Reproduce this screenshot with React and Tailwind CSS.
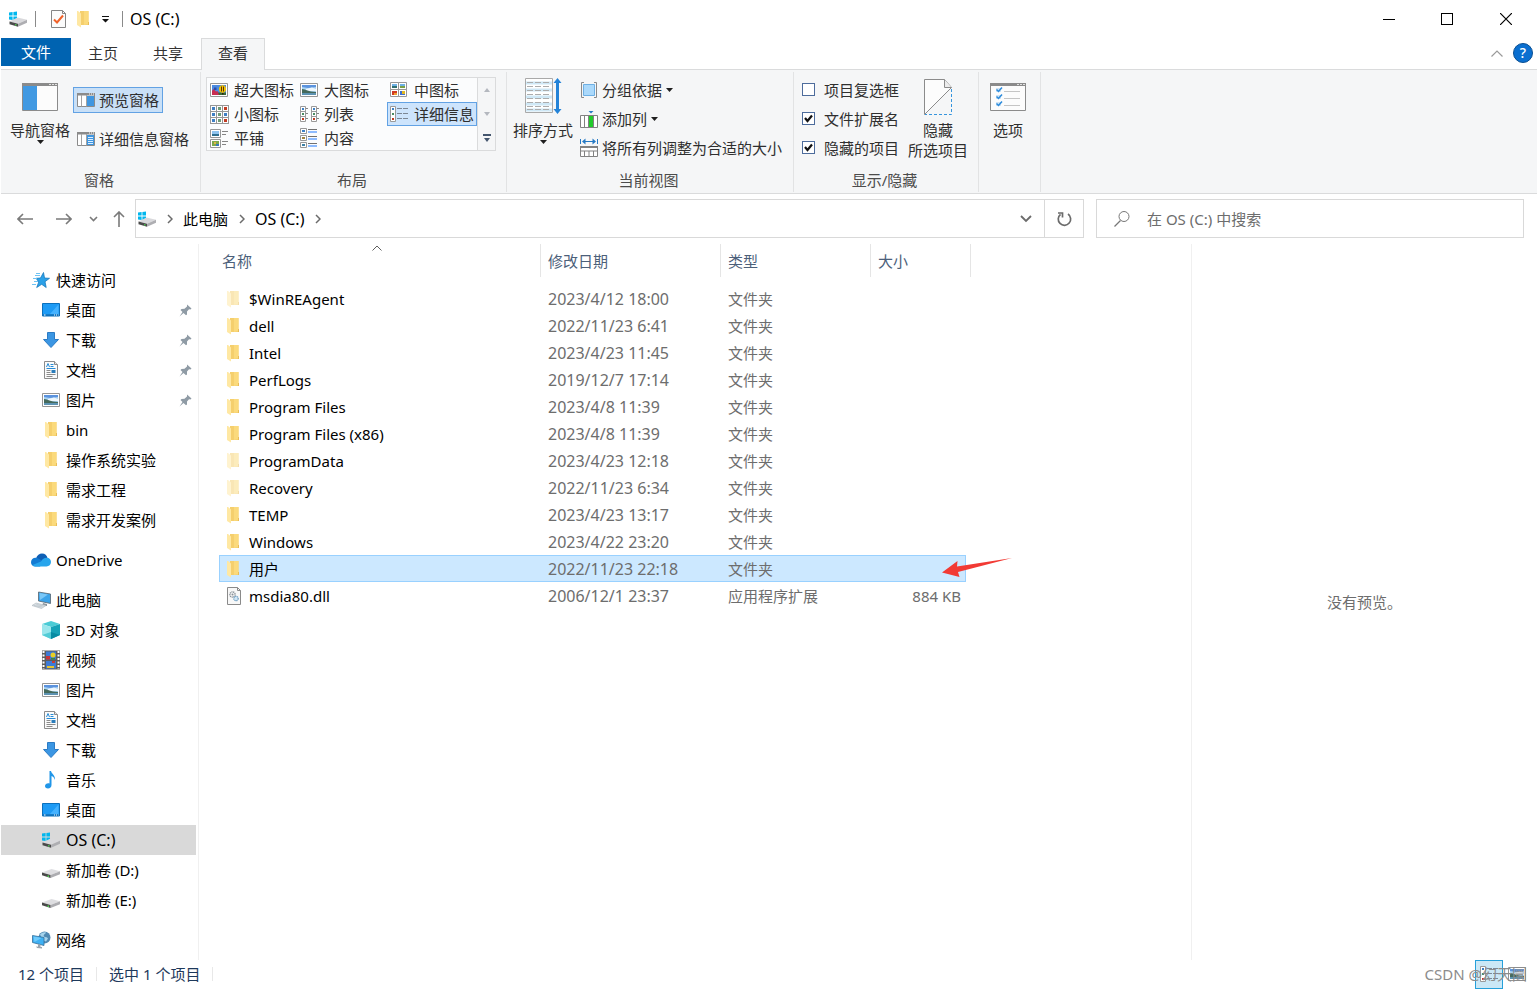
import { useState } from "react";

/* ---------- icons ---------- */

function WindowsDrive() {
    return (
        <svg width="20" height="16" viewBox="0 0 20 16" className="shrink-0">
            <path d="M1 1.4 4.6 1v3.6H1zM5.4 1 9 .4v4.2H5.4zM1 5.4h3.6V9L1 8.6zM5.4 5.4H9v4.2L5.4 9z" fill="#00b7ee" />
            <path d="M1.5 10.5 9.500 6.500 19 8.800 10 12.700z" fill="#d9d9dc" />
            <path d="M10 12.700 19 8.800v3L10 15.800z" fill="#aeaeb2" />
            <path d="M1.500 10.500 10 12.700v3.100L1.500 13.300z" fill="#4a4a4a" />
            <path d="M7 13.200h1.500v1.400H7z" fill="#4fd650" />
        </svg>
    );
}

function Drive() {
    return (
        <svg width="18" height="16" viewBox="0 0 18 16" className="shrink-0">
            <path d="M0 10.500 9.500 7 18 9.200 8.500 13z" fill="#dedee1" />
            <path d="M8.500 13 18 9.200v3L8.500 16z" fill="#adadb1" />
            <path d="M0 10.500 8.500 13v3L0 13.300z" fill="#4a4a4a" />
            <path d="M5.500 13.500H7v1.400H5.500z" fill="#4fd650" />
        </svg>
    );
}

function Folder({ faded }) {
    return (
        <svg width="12" height="18" viewBox="0 0 12 18" className={faded ? "shrink-0 opacity-50" : "shrink-0"}>
            <path d="M3 1h8.500v11H12v3H3z" fill="#f5cf6d" />
            <path d="M7 1h4.500v13L7 15z" fill="#fbda7c" />
            <path d="M0 1h1l3 2.500V17.500L0 15z" fill="#ffe8a3" />
            <path d="M11 12h1v3h-1z" fill="#e9bd58" />
        </svg>
    );
}

function QuickStar() {
    return (
        <svg width="18" height="18" viewBox="0 0 18 18" className="shrink-0">
            <path d="M11.500 1.500 12.500 7l5 .3-4.500 3.400 1.200 5.800-4.500-3.200-5 3.200 2.100-5.600L4 7.300l4.500-.3z" fill="#2ba1e8" stroke="#1879bd" strokeWidth=".8" />
            <path d="M3 4.500h5M1 7.500h4M2 10.500h4M0 13.500h4M4 2.500h4" stroke="#6fc3f3" strokeWidth="1" />
        </svg>
    );
}

function Desktop() {
    return (
        <svg width="18" height="14" viewBox="0 0 18 14" className="shrink-0">
            <path d="M.5.500h17v12.500H.500z" fill="#1e9bf5" stroke="#0b70bd" />
            <path d="M16.500 1.500v9.500H8z" fill="#45b2ff" />
            <path d="M1 12h16" stroke="#0a5f9f" />
            <path d="M2 12h1.500M12 12h1M14 12h1M16 12h.5" stroke="#fff" />
        </svg>
    );
}

function Download() {
    return (
        <svg width="18" height="18" viewBox="0 0 18 18" className="shrink-0">
            <path d="M5.500 1.500h7v7h4L9 16.500 1.500 8.500h4z" fill="#3b96e3" stroke="#2c7bc4" />
        </svg>
    );
}

function Document() {
    return (
        <svg width="18" height="18" viewBox="0 0 18 18" className="shrink-0">
            <path d="M2.500.500h10l3 3v14h-13z" fill="#fbfbfb" stroke="#8c8c8c" />
            <path d="M12.500.500v3h3" fill="#e4e4e4" stroke="#8c8c8c" />
            <path d="m4.500 6 1.500-3.500L7.500 6M8.500 3.500h3M8.500 5.500h3M4.500 7.500h9" fill="none" stroke="#268bd6" />
            <path d="M4.500 9.500h4M4.500 11.500h4M4.500 13.500h9M4.500 15.500h6" stroke="#8b8b8b" />
            <path d="M9.500 9h4v3h-4z" fill="#2b7dbb" />
        </svg>
    );
}

function Picture() {
    return (
        <svg width="18" height="14" viewBox="0 0 18 14" className="shrink-0">
            <path d="M.5.500h17v13H.500z" fill="#fff" stroke="#959595" />
            <path d="M2 2h14v10H2z" fill="#a9d3f3" />
            <path d="M2 2h14v2L8 5 2 4z" fill="#5b93de" />
            <path d="M6 6 12 4.500 16 6v2H6z" fill="#eef7fd" />
            <path d="M2 6c4 .5 6 2.500 14 3v1H2z" fill="#456a5c" />
            <path d="M2 10h14v2H2z" fill="#5d93b3" />
        </svg>
    );
}

function Flowers() {
    return (
        <svg width="18" height="14" viewBox="0 0 18 14" className="shrink-0">
            <path d="M.5.500h17v13H.500z" fill="#fff" stroke="#959595" />
            <path d="M2 2h14v10H2z" fill="#4a8ae0" />
            <path d="M2 9.500h14V12H2z" fill="#3d6a35" />
            <ellipse cx="12.500" cy="6" rx="3.500" ry="3.800" fill="#f6c500" />
            <path d="M11.500 3.500v5M13.500 3.500v5" stroke="#5a3210" />
            <path d="M12 10h1.500v1.500H12z" fill="#2a1a10" />
            <path d="M2 8l1.500-2L6 8.500 7.500 8l1.500 4H2z" fill="#c72d52" />
            <path d="M4 4.500h2.500v2.500H4z" fill="#2c4fa8" />
        </svg>
    );
}

function Cloud() {
    return (
        <svg width="20" height="14" viewBox="0 0 20 14" className="shrink-0">
            <path d="M5 5.500C6 2 8.500.500 11 .5c3 0 5 2 5.500 4.500L12 9z" fill="#0f5fb5" />
            <path d="M4.500 13.500C1.500 13.500 0 11.500 0 9.200 0 6.500 2 4.800 4.500 4.700c2 0 3.500 1 8.500 4.300l-4 4.500z" fill="#137bd3" />
            <path d="M10 8.500c1.500-2.500 3-3.700 5.500-3.700 3 0 4.500 2 4.500 4.300 0 2.700-2 4.400-4.500 4.400h-11c-1 0-2-.5-3-1.500z" fill="#27a5ec" />
        </svg>
    );
}

function Computer() {
    return (
        <svg width="20" height="18" viewBox="0 0 20 18" className="shrink-0">
            <path d="M7.500 1 19.500 3v9.500L7.500 10z" fill="#3ca3e9" stroke="#57636e" strokeWidth=".8" />
            <path d="M8.500 2l8.500 1.500-8 5.500z" fill="#7ac7f7" />
            <path d="m12 12 4 1v2h-5z" fill="#8b959d" />
            <path d="M1 14.500 5 12l10 2.500-4.500 3z" fill="#d8dfe4" stroke="#adb7be" strokeWidth=".6" />
            <path d="m3 14.500 8 1.500M5.500 13.500l7 1.500" stroke="#b3bdc4" strokeWidth=".6" />
        </svg>
    );
}

function Cube() {
    return (
        <svg width="18" height="18" viewBox="0 0 18 18" className="shrink-0">
            <path d="M0 3 9 0l9 3-9 3z" fill="#4bcbd5" />
            <path d="M0 3l9 3v12l-9-4z" fill="#9ae6ec" />
            <path d="M18 3 9 6v12l9-4z" fill="#16a2b7" />
            <path d="m0 14 9-3v7z" fill="#53ccd6" />
            <path d="m18 14-9-3v7z" fill="#078ba3" />
        </svg>
    );
}

function Film() {
    return (
        <svg width="18" height="20" viewBox="0 0 18 20" className="shrink-0">
            <path d="M0 .5h18v19H0z" fill="#5c5c5c" />
            <path d="M1.500 1v18M16.500 1v18" stroke="#fff" strokeWidth="2" strokeDasharray="2 1.500" />
            <path d="M4 1.500h10v8H4zM4 11h10v7.500H4z" fill="#3d7ad6" />
            <circle cx="11" cy="5" r="2.500" fill="#e8cf24" />
            <path d="M4 6h4v3.500H4z" fill="#c8343a" />
            <path d="M9 8h4v1.500H9z" fill="#3b8a3c" />
            <path d="M5 16h7v2H5z" fill="#e7c32c" />
            <path d="M10 11h3v2h-3z" fill="#cc3a30" />
        </svg>
    );
}

function Music() {
    return (
        <svg width="18" height="18" viewBox="0 0 18 18" className="shrink-0">
            <path d="M7.500 0H9c.5 3 4.500 4 4 9-.8-2.500-2-3.500-3.500-4v9c0 2-1.500 3.500-3.500 3.500S3 16.500 3 15c0-2 2.500-3.300 4.500-2.500z" fill="#2196e8" />
        </svg>
    );
}

function Network() {
    return (
        <svg width="20" height="18" viewBox="0 0 20 18" className="shrink-0">
            <circle cx="13.500" cy="6.500" r="6" fill="#5089b3" />
            <path d="M9 3.500C11 2 12 1 15 1.500c-1 2-3 2-2 4 1 1 3 0 4 2l-2 3-3-1z" fill="#a5d3ec" />
            <path d="m1.500 4.500 11.500 2v8L1.500 11.500z" fill="#3eb0f3" stroke="#356f9a" strokeWidth=".8" />
            <path d="m2.500 5.500 8 1.500-7 4z" fill="#71cbfb" />
            <path d="m7 13 2.500.6V16H7zM5 15.500l6 .5v1.500l-5-.5z" fill="#9aa5ae" />
        </svg>
    );
}

function Pin() {
    return (
        <svg width="13" height="13" viewBox="0 0 13 13">
            <path d="M8 .5 12.500 4.500 11.500 5.500 10 5.300 8 7.500v3l-1 .8L4.500 9 .5 12.500l3-4.500L1.500 6l1-1 3-.2L8 2.500z" fill="#8f9ba5" />
        </svg>
    );
}

function DllFile() {
    return (
        <svg width="14" height="18" viewBox="0 0 14 18" className="shrink-0">
            <path d="M.5.500h10l3 3v14H.500z" fill="#f8f8f8" stroke="#8a8a8a" />
            <path d="M10.500.500v3h3" fill="none" stroke="#8a8a8a" />
            <circle cx="5.500" cy="7.500" r="2.600" fill="none" stroke="#8a9299" strokeWidth="1.400" strokeDasharray="1.200 .6" />
            <circle cx="5.500" cy="7.500" r="1" fill="#8a9299" />
            <circle cx="9" cy="11.500" r="2.200" fill="#d3e7f5" stroke="#6f9fc3" strokeWidth="1.200" strokeDasharray="1.200 .5" />
        </svg>
    );
}

function Caret() {
    return (
        <svg width="7" height="4" viewBox="0 0 7 4" className="shrink-0">
            <path d="M0 0h7L3.500 4z" fill="#1f1f1f" />
        </svg>
    );
}

function Chevron() {
    return (
        <svg width="6" height="10" viewBox="0 0 6 10" fill="none" className="shrink-0">
            <path d="m1 1 4 4-4 4" stroke="#6b6b6b" strokeWidth="1.500" />
        </svg>
    );
}

function PaneIcon({ lines }) {
    return (
        <svg width="18" height="14" viewBox="0 0 18 14" className="shrink-0">
            <path d="M.5.500h17v13H.500z" fill="#fff" stroke="#8b8b8b" />
            <path d="M0 0h18v2.500H0z" fill="#8b8b8b" />
            <path d="M12 1h1M14 1h1M16 1h1" stroke="#fff" />
            <path d="M4.500 2v11.500M9.500 2v11.500" stroke="#a3a3a3" />
            <path d="M10 3h7v10h-7z" fill="#3f96e0" />
            {lines && <path d="M11 5.500h5M11 7.500h5M11 9.500h5M11 11.500h5" stroke="#dceeff" />}
        </svg>
    );
}

function NavPaneIcon() {
    return (
        <svg width="36" height="28" viewBox="0 0 36 28">
            <path d="M.5.500h35v27H.500z" fill="#fcfcfc" stroke="#8b8b8b" />
            <path d="M0 0h36v3H0z" fill="#8b8b8b" />
            <path d="M27 1.500h2M30 1.500h2M33 1.500h2" stroke="#e2e2e2" />
            <path d="M1 3h14v24H1z" fill="#4199e2" />
        </svg>
    );
}

function MediumIcons() {
    return (
        <svg width="18" height="16" viewBox="0 0 18 16" className="shrink-0">
            <path d="M.5.500h8v7h-8zM8.500.500h8v7h-8zM.500 7.500h8v7h-8zM8.500 7.500h8v7h-8z" fill="#fff" stroke="#979797" />
            <path d="M2 2h5v2H2zM10 2h5v2h-5z" fill="#6fb1e6" />
            <path d="M2 4h5v2H2z" fill="#2f6f6f" />
            <path d="M10 4h5v2h-5z" fill="#7aa046" />
            <path d="M2 9h5v4H2z" fill="#d03a20" />
            <path d="M4 11h3v2H4z" fill="#f0a030" />
            <path d="M10 9h5v4h-5z" fill="#3f6fd0" />
            <path d="M12 9h3v3h-3z" fill="#e0b820" />
        </svg>
    );
}

function SmallIcons() {
    return (
        <svg width="19" height="19" viewBox="0 0 19 19" className="shrink-0">
            {[0, 6, 12].map((y, r) =>
                [0, 6, 12].map((x, c) => (
                    <g key={x + "-" + y}>
                        <rect x={x + 0.5} y={y + 0.5} width="6" height="6" fill="#fff" stroke="#979797" />
                        <rect x={x + 2} y={y + 2} width="3" height="3" fill={["#3f7fc4", "#6d9a77", "#c23b22"][(r === 1 && c === 2 ? 0 : c)]} />
                    </g>
                ))
            )}
        </svg>
    );
}

function ListIcon() {
    return (
        <svg width="20" height="18" viewBox="0 0 20 18" className="shrink-0">
            {[0, 11].map((x) => (
                <g key={x}>
                    <path d={`M${x + 0.5} 1.500h5v15h-5zM${x} 6.500h5M${x} 11.500h5`} fill="#fff" stroke="#9a9a9a" />
                    <path d={`M${x + 2} 4h2`} stroke="#3c80c6" strokeWidth="2" />
                    <path d={`M${x + 2} 9h2`} stroke="#4c8c63" strokeWidth="2" />
                    <path d={`M${x + 2} 14h2`} stroke="#c23b22" strokeWidth="2" />
                    <path d={`M${x + 6} 3.500h2M${x + 6} 8.500h2M${x + 6} 13.500h2`} stroke="#858585" />
                </g>
            ))}
        </svg>
    );
}

function DetailsIcon() {
    return (
        <svg width="19" height="18" viewBox="0 0 19 18" className="shrink-0">
            <path d="M.5 1.500h5v15h-5z" fill="#fff" stroke="#9a9a9a" />
            <path d="M2 4h2" stroke="#3c80c6" strokeWidth="2" />
            <path d="M2 9h2" stroke="#4c8c63" strokeWidth="2" />
            <path d="M2 14h2" stroke="#c23b22" strokeWidth="2" />
            <path d="M7 3.500h5M13 3.500h5M7 8.500h5M13 8.500h5M7 13.500h5M13 13.500h5" stroke="#7c8794" />
        </svg>
    );
}

function TilesIcon() {
    return (
        <svg width="19" height="19" viewBox="0 0 19 19" className="shrink-0">
            <path d="M.5.500h10v8H.500zM.500 10.500h10v8H.500z" fill="#fff" stroke="#979797" />
            <path d="M2 2h7v3H2z" fill="#8fc3ee" />
            <path d="M2 5h7v2H2z" fill="#2f6f8f" />
            <path d="M2 12h7v5H2z" fill="#7ca84c" />
            <path d="M4 13h2v2H4z" fill="#e4b44a" />
            <path d="M6 15h3v2H6z" fill="#3c77bd" />
            <path d="M12 2.500h6M12 5.500h4M12 12.500h6M12 15.500h4" stroke="#858585" />
        </svg>
    );
}

function ContentIcon() {
    return (
        <svg width="18" height="20" viewBox="0 0 18 20" className="shrink-0">
            <path d="M.5.500h6v5h-6zM.500 7.500h6v5h-6zM.500 14.500h6v5h-6z" fill="#fff" stroke="#979797" />
            <path d="M2 3h3" stroke="#3c80c6" strokeWidth="2" />
            <path d="M2 10h3" stroke="#a08440" strokeWidth="2" />
            <path d="M2 17h3" stroke="#3c80a6" strokeWidth="2" />
            <path d="M8 1.500h9M8 8.500h9M8 15.500h9" stroke="#707070" />
            <path d="M8 4h9M8 11h9M8 18h9" stroke="#6aa5ff" strokeWidth="1.500" />
        </svg>
    );
}

function SortIcon() {
    return (
        <svg width="37" height="36" viewBox="0 0 37 36">
            <path d="M.5.500h27v34H.500z" fill="#fff" stroke="#a9a9a9" />
            <path d="M1 5h26M1 12h26M1 19h26M1 26h26M1 32h26" stroke="#cfe8f6" strokeWidth="3" />
            <path d="M2 4.500h24M2 8.500h24M2 12.500h24M2 16.500h24M2 20.500h24M2 24.500h24M2 28.500h24M2 31.500h24" stroke="#acacac" strokeDasharray="6 2" />
            <path d="M32.500 3v30" stroke="#2383d8" strokeWidth="3" />
            <path d="M28.500 5l4-5 4 5zM28.500 31l4 5 4-5z" fill="#2383d8" />
        </svg>
    );
}

function GroupByIcon() {
    return (
        <svg width="18" height="18" viewBox="0 0 18 18" className="shrink-0">
            <path d="M4 1.500H1.500v15H4M14 1.500h2.500v15H14" fill="none" stroke="#8a8a8a" />
            <path d="M3.500 3.500h11v11h-11z" fill="#abd9fb" stroke="#6eb0e4" />
        </svg>
    );
}

function AddColumnIcon() {
    return (
        <svg width="18" height="18" viewBox="0 0 18 18" className="shrink-0">
            <path d="M.5 5.500h17v12H.500z" fill="#fff" stroke="#828282" />
            <path d="M4.500 5v12M8.500 5v12M13.500 5v12" stroke="#828282" />
            <path d="M9 6h4v11H9z" fill="#22cb2b" />
            <path d="M8.500 1h5L11 3.500z" fill="#2579c4" />
        </svg>
    );
}

function FitColumnsIcon() {
    return (
        <svg width="18" height="19" viewBox="0 0 18 19" className="shrink-0">
            <path d="M.5 1v5M17.500 1v5M3 3.500h12" stroke="#2579c4" />
            <path d="M5.500.500 2 3.500l3.500 3zM12.500.500l3.500 3-3.500 3z" fill="#2579c4" />
            <path d="M.5 8.500h17v10H.500z" fill="#fff" stroke="#828282" />
            <path d="M0 8h18v2H0zM0 12.500h18v1H0zM4 13h1v5H4zM8.500 13h1v5h-1zM13 13h1v5h-1z" fill="#828282" />
        </svg>
    );
}

function HideIcon() {
    return (
        <svg width="28" height="36" viewBox="0 0 28 36">
            <path d="M.5.500h20l7 8-27 27z" fill="#fcfcfc" stroke="#8b8b8b" />
            <path d="M20.500.500v8h7" fill="#ececec" stroke="#8b8b8b" />
            <path d="M27.500 10v25.500H1" fill="none" stroke="#3695dd" strokeDasharray="3 2" />
        </svg>
    );
}

function OptionsIcon() {
    return (
        <svg width="36" height="28" viewBox="0 0 36 28">
            <path d="M.5.500h35v27H.500z" fill="#fcfcfc" stroke="#8b8b8b" />
            <path d="M0 0h36v3H0z" fill="#8b8b8b" />
            <path d="M27 1.500h2M30 1.500h2M33 1.500h2" stroke="#e2e2e2" />
            <path d="M6 5h5v4H6zM6 12h5v4H6zM6 19h5v4H6z" fill="#cfe4f5" />
            <path d="m6.500 6.500 2 2 3.500-4M6.500 13.500l2 2 3.500-4M6.500 20.500l2 2 3.500-4" fill="none" stroke="#2c8bdc" strokeWidth="1.500" />
            <path d="M14 8.500h16M14 15.500h16M14 22.500h16" stroke="#c5c5c5" />
        </svg>
    );
}

/* ---------- data ---------- */

const quickItems = [
    { name: "桌面", Icon: Desktop, pinned: true },
    { name: "下载", Icon: Download, pinned: true },
    { name: "文档", Icon: Document, pinned: true },
    { name: "图片", Icon: Picture, pinned: true },
    { name: "bin", Icon: Folder },
    { name: "操作系统实验", Icon: Folder },
    { name: "需求工程", Icon: Folder },
    { name: "需求开发案例", Icon: Folder },
];

const pcItems = [
    { name: "3D 对象", Icon: Cube },
    { name: "视频", Icon: Film },
    { name: "图片", Icon: Picture },
    { name: "文档", Icon: Document },
    { name: "下载", Icon: Download },
    { name: "音乐", Icon: Music },
    { name: "桌面", Icon: Desktop },
    { name: "OS (C:)", Icon: WindowsDrive, active: true },
    { name: "新加卷 (D:)", Icon: Drive },
    { name: "新加卷 (E:)", Icon: Drive },
];

const files = [
    { name: "$WinREAgent", date: "2023/4/12 18:00", type: "文件夹", faded: true },
    { name: "dell", date: "2022/11/23 6:41", type: "文件夹" },
    { name: "Intel", date: "2023/4/23 11:45", type: "文件夹" },
    { name: "PerfLogs", date: "2019/12/7 17:14", type: "文件夹" },
    { name: "Program Files", date: "2023/4/8 11:39", type: "文件夹" },
    { name: "Program Files (x86)", date: "2023/4/8 11:39", type: "文件夹" },
    { name: "ProgramData", date: "2023/4/23 12:18", type: "文件夹", faded: true },
    { name: "Recovery", date: "2022/11/23 6:34", type: "文件夹", faded: true },
    { name: "TEMP", date: "2023/4/23 13:17", type: "文件夹" },
    { name: "Windows", date: "2023/4/22 23:20", type: "文件夹" },
    { name: "用户", date: "2022/11/23 22:18", type: "文件夹" },
    { name: "msdia80.dll", date: "2006/12/1 23:37", type: "应用程序扩展", size: "884 KB", dll: true },
];

const views = [
    { name: "超大图标", icon: <Flowers /> },
    { name: "大图标", icon: <Picture /> },
    { name: "中图标", icon: <MediumIcons /> },
    { name: "小图标", icon: <SmallIcons /> },
    { name: "列表", icon: <ListIcon /> },
    { name: "详细信息", icon: <DetailsIcon /> },
    { name: "平铺", icon: <TilesIcon /> },
    { name: "内容", icon: <ContentIcon /> },
];

/* ---------- sections ---------- */

function TitleBar() {
    return (
        <header className="flex h-[38px] items-center pl-[7px]">
            <WindowsDrive />
            <span className="ml-[7px] h-4 w-px bg-[#8a8a8a]" />
            <button aria-label="属性" className="ml-[15px]">
                <svg width="15" height="18" viewBox="0 0 15 18">
                    <path d="M.5.500h11l3 3v14H.500z" fill="#fbfbfb" stroke="#858585" />
                    <path d="M11.500.500v3h3" fill="none" stroke="#858585" />
                    <path d="m3 9.500 3 3 6-7" fill="none" stroke="#f0622a" strokeWidth="2" />
                </svg>
            </button>
            <button aria-label="新建文件夹" className="ml-[11px]">
                <Folder />
            </button>
            <button aria-label="自定义快速访问工具栏" className="ml-[13px]">
                <svg width="7" height="7" viewBox="0 0 7 7">
                    <path d="M0 0h7v1H0zM0 3h7L3.500 6.500z" fill="#111" />
                </svg>
            </button>
            <span className="ml-[13px] h-4 w-px bg-[#8a8a8a]" />
            <h1 className="ml-[7px] text-base leading-5">OS (C:)</h1>
            <div className="ml-auto flex self-stretch pr-px">
                <button aria-label="最小化" className="flex w-[58px] items-center justify-center">
                    <span className="h-px w-3 bg-black" />
                </button>
                <button aria-label="最大化" className="flex w-[58px] items-center justify-center">
                    <span className="size-3 border border-black" />
                </button>
                <button aria-label="关闭" className="flex w-[60px] items-center justify-center">
                    <svg width="12" height="12" viewBox="0 0 12 12">
                        <path d="m0 0 12 12M12 0 0 12" stroke="#000" strokeWidth="1.200" />
                    </svg>
                </button>
            </div>
        </header>
    );
}

function Tabs() {
    return (
        <nav className="flex h-8 border-b border-[#dadbdc]">
            <button className="h-7 w-[70px] bg-[#0063b1] text-white">文件</button>
            <button className="w-16 pb-px text-[#333]">主页</button>
            <button className="w-[66px] pb-px text-[#333]">共享</button>
            <button className="-mb-px w-16 border border-b-0 border-[#dadbdc] bg-[#f5f6f7] pb-1 text-[#333]">查看</button>
            <div className="ml-auto flex items-center gap-2.5 pr-1 pb-px">
                <button aria-label="最小化功能区">
                    <svg width="12" height="7" viewBox="0 0 12 7" fill="none">
                        <path d="m.5 6.500 5.500-5.500 5.500 5.500" stroke="#9a9a9a" strokeWidth="1.200" />
                    </svg>
                </button>
                <button aria-label="帮助" className="size-5 rounded-full border border-[#0a4f92] bg-[#0a6fd0] text-sm leading-4 font-medium text-white">
                    ?
                </button>
            </div>
        </nav>
    );
}

function RibbonGroup({ label, className, children }) {
    return (
        <section className={"flex h-[120px] flex-col border-r border-[#e2e3e4] " + className}>
            <div className="flex flex-1 items-start">{children}</div>
            <h2 className="h-6 pr-[3px] text-center leading-6 text-[#4c4c4c]">{label}</h2>
        </section>
    );
}

function Check({ label, checked }) {
    const [on, setOn] = useState(checked);
    return (
        <label className="flex h-[29px] items-center gap-[9px]">
            <span className="relative flex size-[13px]">
                <input
                    type="checkbox"
                    checked={on}
                    onChange={() => setOn(!on)}
                    className="size-[13px] appearance-none border border-[#4d6c9c] bg-white"
                />
                {on && (
                    <svg width="13" height="13" viewBox="0 0 13 13" className="pointer-events-none absolute inset-0">
                        <path d="m3 6 2.500 3L10 3.500" fill="none" stroke="#111" strokeWidth="2.200" />
                    </svg>
                )}
            </span>
            {label}
        </label>
    );
}

function Ribbon() {
    return (
        <div className="flex border-b border-[#dadbdc] bg-[#f5f6f7] pt-0.5 pb-px text-[#2f2f2f]">
            <RibbonGroup label="窗格" className="w-[200px]">
                <button className="ml-[7px] flex w-16 flex-col items-center pt-[11px]">
                    <NavPaneIcon />
                    <span className="mt-[7px] leading-6">导航窗格</span>
                    <span className="-mt-0.5">
                        <Caret />
                    </span>
                </button>
                <div className="ml-px flex flex-col items-start gap-[13px] pt-[15px]">
                    <button className="flex h-[26px] items-center gap-1 border border-[#62a2e4] bg-[#c9e0f7] px-[3px]">
                        <PaneIcon />
                        预览窗格
                    </button>
                    <button className="flex h-[26px] items-center gap-1 border border-transparent px-[3px]">
                        <PaneIcon lines />
                        详细信息窗格
                    </button>
                </div>
            </RibbonGroup>

            <RibbonGroup label="布局" className="w-[306px]">
                <div className="mt-[5px] ml-[5px] flex">
                    <div className="grid grid-cols-[90px_90px_90px] grid-rows-[24px_24px_24px] border border-[#dadbdc] bg-[#fbfcfd]">
                        {views.map((v) => (
                            <button
                                key={v.name}
                                className={
                                    "flex items-center border " +
                                    (v.name === "详细信息" ? "border-[#62a2e4] bg-[#cde4fc]" : "border-transparent")
                                }
                            >
                                <span className="ml-0.5 flex w-6 shrink-0">{v.icon}</span>
                                {v.name}
                            </button>
                        ))}
                    </div>
                    <div className="flex w-[18px] flex-col border border-l-0 border-[#dadbdc]">
                        <button aria-label="上一行" className="flex flex-1 items-center justify-center">
                            <svg width="6" height="4" viewBox="0 0 6 4"><path d="M0 4h6L3 0z" fill="#b4b8bf" /></svg>
                        </button>
                        <button aria-label="下一行" className="flex flex-1 items-center justify-center">
                            <svg width="6" height="4" viewBox="0 0 6 4"><path d="M0 0h6L3 4z" fill="#b4b8bf" /></svg>
                        </button>
                        <button aria-label="更多" className="flex flex-1 items-center justify-center">
                            <svg width="8" height="8" viewBox="0 0 8 8"><path d="M0 0h8v2H0zM1 4h6L4 8z" fill="#44566e" /></svg>
                        </button>
                    </div>
                </div>
            </RibbonGroup>

            <RibbonGroup label="当前视图" className="w-[287px]">
                <button className="ml-[5px] flex w-[62px] flex-col items-center pt-1.5">
                    <SortIcon />
                    <span className="mt-1 leading-6">排序方式</span>
                    <span className="-mt-0.5">
                        <Caret />
                    </span>
                </button>
                <div className="ml-1.5 flex flex-col items-start pt-[3px]">
                    <button className="flex h-[29px] items-center gap-1">
                        <GroupByIcon />
                        分组依据
                        <Caret />
                    </button>
                    <button className="flex h-[29px] items-center gap-1">
                        <AddColumnIcon />
                        添加列
                        <Caret />
                    </button>
                    <button className="flex h-[29px] items-center gap-1">
                        <FitColumnsIcon />
                        将所有列调整为合适的大小
                    </button>
                </div>
            </RibbonGroup>

            <RibbonGroup label="显示/隐藏" className="w-[185px]">
                <div className="ml-2 flex flex-col pt-[3px]">
                    <Check label="项目复选框" checked={false} />
                    <Check label="文件扩展名" checked />
                    <Check label="隐藏的项目" checked />
                </div>
                <button className="ml-[9px] flex flex-col items-center pt-[7px] leading-5">
                    <HideIcon />
                    <span className="mt-[5px]">隐藏</span>
                    <span>所选项目</span>
                </button>
            </RibbonGroup>

            <RibbonGroup label="" className="w-[62px]">
                <button className="ml-[11px] flex flex-col items-center pt-[11px]">
                    <OptionsIcon />
                    <span className="mt-[7px] leading-6">选项</span>
                </button>
            </RibbonGroup>
        </div>
    );
}

function AddressBar() {
    return (
        <div className="flex h-[50px] items-center pr-[13px] pb-px">
            <div className="flex w-[134px] items-center pl-4">
                <button aria-label="后退">
                    <svg width="16" height="12" viewBox="0 0 16 12" fill="none">
                        <path d="M16 6H1M6 1 1 6l5 5" stroke="#7a7a7a" strokeWidth="1.600" />
                    </svg>
                </button>
                <button aria-label="前进" className="ml-[23px]">
                    <svg width="16" height="12" viewBox="0 0 16 12" fill="none">
                        <path d="M0 6h15M10 1l5 5-5 5" stroke="#7a7a7a" strokeWidth="1.600" />
                    </svg>
                </button>
                <button aria-label="最近浏览的位置" className="ml-[17px]">
                    <svg width="9" height="6" viewBox="0 0 9 6" fill="none">
                        <path d="m1 1 3.500 3.500L8 1" stroke="#7a7a7a" strokeWidth="1.600" />
                    </svg>
                </button>
                <button aria-label="上移" className="ml-[15px]">
                    <svg width="12" height="16" viewBox="0 0 12 16" fill="none">
                        <path d="M6 16V1M1 6l5-5 5 5" stroke="#7a7a7a" strokeWidth="1.600" />
                    </svg>
                </button>
            </div>
            <div className="flex h-[39px] flex-1 items-center border border-[#d9d9d9] pl-px">
                <WindowsDrive />
                <span className="ml-2.5 flex"><Chevron /></span>
                <a href="#pc" className="ml-2.5">此电脑</a>
                <span className="ml-[11px] flex"><Chevron /></span>
                <a href="#c" className="ml-2.5 text-base leading-5">OS (C:)</a>
                <span className="ml-[11px] flex"><Chevron /></span>
                <button aria-label="以前的位置" className="ml-auto flex h-full w-9 items-center justify-center">
                    <svg width="12" height="8" viewBox="0 0 12 8" fill="none">
                        <path d="m1 1 5 5 5-5" stroke="#6b6b6b" strokeWidth="1.800" />
                    </svg>
                </button>
                <button aria-label="刷新" className="flex h-full w-[39px] items-center justify-center border-l border-[#d9d9d9]">
                    <svg width="16" height="16" viewBox="0 0 16 16" fill="none">
                        <path d="M12 3a6.200 6.200 0 1 1-7.500.3M2 2h4.500v4.500" stroke="#6b6b6b" strokeWidth="1.700" />
                    </svg>
                </button>
            </div>
            <label className="ml-3 flex h-[39px] w-[428px] items-center border border-[#d9d9d9] pl-[17px]">
                <svg width="16" height="16" viewBox="0 0 16 16" fill="none" className="shrink-0">
                    <circle cx="10" cy="5.500" r="5" stroke="#777" />
                    <path d="M6.500 9.500.500 15.500" stroke="#777" strokeWidth="1.200" />
                </svg>
                <input
                    type="text"
                    aria-label="搜索"
                    placeholder="在 OS (C:) 中搜索"
                    className="ml-[17px] w-full outline-none placeholder:text-[#6d6d6d]"
                />
            </label>
        </div>
    );
}

function TreeItem({ name, Icon, root, pinned, active }) {
    return (
        <li>
            <a
                href="#"
                className={
                    "flex h-[30px] items-center pr-1 " +
                    (root ? "pl-[30px] " : "pl-[41px] ") +
                    (active ? "bg-[#d9d9d9]" : "")
                }
            >
                <span className={"flex shrink-0 justify-center " + (root ? "w-5" : "w-[18px]")}>
                    <Icon />
                </span>
                <span className={(root ? "ml-[5px]" : "ml-1.5") + (active ? " text-base leading-5" : "")}>{name}</span>
                {pinned && (
                    <span className="ml-auto">
                        <Pin />
                    </span>
                )}
            </a>
        </li>
    );
}

function Sidebar() {
    return (
        <aside className="w-[198px] shrink-0 border-r border-[#f0f0f0] pt-[21px] pr-0.5">
            <ul>
                <TreeItem name="快速访问" Icon={QuickStar} root />
                {quickItems.map((item) => (
                    <TreeItem key={item.name} {...item} />
                ))}
            </ul>
            <ul className="mt-2.5">
                <TreeItem name="OneDrive" Icon={Cloud} root />
            </ul>
            <ul className="mt-2.5">
                <TreeItem name="此电脑" Icon={Computer} root />
                {pcItems.map((item) => (
                    <TreeItem key={item.name} {...item} />
                ))}
            </ul>
            <ul className="mt-2.5">
                <TreeItem name="网络" Icon={Network} root />
            </ul>
        </aside>
    );
}

function FileTable() {
    const [selected, setSelected] = useState("用户");
    return (
        <div className="relative ml-5">
            <svg width="10" height="6" viewBox="0 0 10 6" fill="none" className="absolute top-px left-[153px]">
                <path d="m.5 5.500 4.500-4.500 4.500 4.500" stroke="#5f5f5f" />
            </svg>
            <table className="w-[752px] table-fixed border-separate border-spacing-0 text-left">
                <thead className="text-[#4c607a]">
                    <tr className="h-[33px]">
                        <th className="w-[322px] border-r border-[#e5e5e5] pl-[3px] font-normal">名称</th>
                        <th className="w-[180px] border-r border-[#e5e5e5] pl-[7px] font-normal">修改日期</th>
                        <th className="w-[150px] border-r border-[#e5e5e5] pl-[7px] font-normal">类型</th>
                        <th className="w-[95px] pl-[7px] font-normal">大小</th>
                        <th className="w-[5px] border-r border-[#e5e5e5]" />
                    </tr>
                </thead>
                <tbody className="text-[#6d6d6d]">
                    <tr className="h-2" aria-hidden="true">
                        <td colSpan={5} />
                    </tr>
                    {files.map((f) => {
                        const on = f.name === selected;
                        const cell = on ? "border-y border-[#99d1ff] bg-[#cce8ff] " : "border-y border-transparent ";
                        return (
                            <tr key={f.name} className="h-[27px]" onClick={() => setSelected(f.name)}>
                                <td className={cell + (on ? "border-l pl-[7px]" : "pl-2")}>
                                    <div className="flex items-center text-black">
                                        <span className="flex w-[22px]">
                                            {f.dll ? <DllFile /> : <Folder faded={f.faded} />}
                                        </span>
                                        {f.name}
                                    </div>
                                </td>
                                <td className={cell + "pl-[7px] text-base leading-5"}>{f.date}</td>
                                <td className={cell + "pl-[7px]"}>{f.type}</td>
                                <td className={cell + "text-right " + (on ? "border-r pr-1" : "pr-[5px]")}>{f.size}</td>
                                <td />
                            </tr>
                        );
                    })}
                </tbody>
            </table>
            {/* red annotation arrow pointing at the selected row */}
            <svg width="72" height="22" viewBox="0 0 72 22" className="absolute top-[313px] left-[722px]">
                <path d="M1 15.500 16.500 4l-.5 5.500L71 1 17 15l1.500 5z" fill="#f23a34" />
            </svg>
        </div>
    );
}

function StatusBar() {
    return (
        <footer className="relative flex h-[30px] items-center pr-[11px] pb-0.5 text-[#1e395b]">
            <span className="pl-[17px]">12 个项目</span>
            <span className="ml-3 h-3.5 w-px bg-[#e8e8e8]" />
            <span className="ml-3">选中 1 个项目</span>
            <span className="ml-3 h-3.5 w-px bg-[#e8e8e8]" />
            <div className="ml-auto flex items-center gap-[5px]">
                <button aria-label="详细信息" className="flex h-[29px] w-7 items-center justify-center border border-[#26a0da] bg-[#cbe8f6]">
                    <DetailsIcon />
                </button>
                <button aria-label="大缩略图">
                    <Picture />
                </button>
            </div>
            <span className="pointer-events-none absolute right-2.5 text-[#8c8c8c]">CSDN @幻天圜</span>
        </footer>
    );
}

export default function App() {
    return (
        <div className="flex min-h-screen flex-col bg-white pl-px font-['Noto_Sans','Noto_Sans_CJK_SC',sans-serif] text-[15px] leading-5 text-black">
            <TitleBar />
            <Tabs />
            <Ribbon />
            <AddressBar />
            <main className="flex flex-1">
                <Sidebar />
                <div className="flex-1">
                    <FileTable />
                </div>
                <aside className="flex w-[346px] items-center justify-center border-l border-[#f0f0f0] text-[#6d6d6d]">
                    没有预览。
                </aside>
            </main>
            <StatusBar />
        </div>
    );
}
